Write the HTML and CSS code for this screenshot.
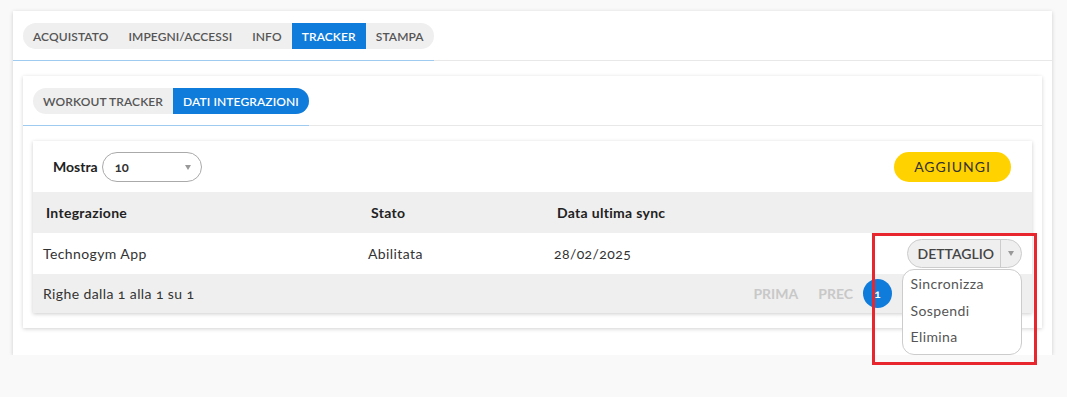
FILE: index.html
```html
<!DOCTYPE html>
<html lang="it">

<head>
    <meta charset="UTF-8">
    <meta name="viewport" content="width=device-width, initial-scale=1.0">
    <title>Tracker - Dati integrazioni</title>
    <link rel="stylesheet" href="styles.css">
</head>

<body>
    <div class="panel">
        <div class="tab-head">
            <div class="tab-wrap">
                <ul class="tabs">
                    <li>Acquistato</li>
                    <li>Impegni/Accessi</li>
                    <li>Info</li>
                    <li class="active">Tracker</li>
                    <li>Stampa</li>
                </ul>
            </div>
        </div>

        <div class="card">
            <div class="tab-head">
                <div class="tab-wrap">
                    <ul class="tabs">
                        <li>Workout Tracker</li>
                        <li class="active">Dati integrazioni</li>
                    </ul>
                </div>
            </div>

            <div class="table-card">
                <div class="toolbar">
                    <label class="show">
                        Mostra
                        <span class="select">10<span class="caret"></span></span>
                    </label>
                    <button class="btn-add">Aggiungi</button>
                </div>

                <div class="row head">
                    <div>Integrazione</div>
                    <div>Stato</div>
                    <div>Data ultima sync</div>
                    <div></div>
                </div>
                <div class="row body">
                    <div>Technogym App</div>
                    <div>Abilitata</div>
                    <div>28/02/2025</div>
                    <div class="actions">
                        <div class="btn-group">
                            <span class="btn-main">Dettaglio</span>
                            <span class="btn-toggle"><span class="caret"></span></span>
                            <ul class="menu">
                                <li>Sincronizza</li>
                                <li>Sospendi</li>
                                <li>Elimina</li>
                            </ul>
                        </div>
                    </div>
                </div>
                <div class="row foot">
                    <div class="info">Righe dalla 1 alla 1 su 1</div>
                    <div class="pager">
                        <span class="page-link">Prima</span>
                        <span class="page-link">Prec</span>
                        <span class="page-num">1</span>
                    </div>
                </div>
            </div>
        </div>
    </div>

    <!-- highlight box from the screenshot -->
    <div class="highlight"></div>
</body>

</html>
```

FILE: styles.css
```css
body {
    margin: 0;
    padding: 11px 15px 0 13px;
    background: #f9f9f9;
    font-family: Lato, "Open Sans", sans-serif;
    font-size: 14px;
    color: #333;
    font-variant-numeric: oldstyle-nums;
}

ul {
    margin: 0;
    padding: 0;
    list-style: none;
}

.panel {
    width: 1039px;
    background: #fff;
    box-shadow: 0 1px 4px rgba(0, 0, 0, 0.18);
    padding-bottom: 27px;
}

/* Tabs */
.tab-head {
    display: flex;
    border-bottom: 1px solid #e8e8e8;
}

.tab-wrap {
    padding: 12px 0 11px 10px;
    border-bottom: 1px solid #9fcbf0;
    margin-bottom: -1px;
}

.tabs {
    display: flex;
    height: 26px;
    background: #efefef;
    border-radius: 13px;
    overflow: hidden;
}

.tabs li {
    display: flex;
    align-items: center;
    padding: 0 10px;
    font-size: 12px;
    font-weight: 600;
    letter-spacing: 0.1px;
    text-transform: uppercase;
    color: #555;
    white-space: nowrap;
}

.tabs li.active {
    background: #0f7bdb;
    color: #fff;
}

.card {
    margin: 15px 10px 0 10px;
    background: #fff;
    box-shadow: 0 1px 4px rgba(0, 0, 0, 0.18);
    padding-bottom: 15px;
}

.table-card {
    margin: 15px 10px 0 10px;
    background: #fff;
    box-shadow: 0 1px 4px rgba(0, 0, 0, 0.2);
}

/* Toolbar */
.toolbar {
    display: flex;
    justify-content: space-between;
    align-items: center;
    height: 51px;
    padding: 0 21px 0 20px;
}

.show {
    display: flex;
    align-items: center;
    gap: 4px;
    font-weight: 700;
    color: #222;
}

.select {
    position: relative;
    display: flex;
    align-items: center;
    width: 86px;
    height: 28px;
    padding-left: 12px;
    border: 1px solid #aaa;
    border-radius: 15px;
    font-size: 13px;
    font-weight: 700;
    color: #333;
}

.select .caret {
    position: absolute;
    right: 10px;
    top: 12px;
}

.caret {
    display: inline-block;
    width: 0;
    height: 0;
    border-left: 3.5px solid transparent;
    border-right: 3.5px solid transparent;
    border-top: 5px solid #999;
}

.btn-add {
    width: 117px;
    height: 30px;
    border: 0;
    border-radius: 15px;
    background: #ffd200;
    font-family: inherit;
    font-size: 14px;
    letter-spacing: 1px;
    text-transform: uppercase;
    color: #333;
}

/* Table */
.row {
    display: grid;
    grid-template-columns: 325px 186px 1fr 140px;
    align-items: center;
}

.row.head {
    height: 41px;
    background: #efefef;
    font-weight: 700;
    color: #222;
    letter-spacing: 0.3px;
}

.row.head > div {
    padding-left: 13px;
}

.row.body {
    height: 41px;
    letter-spacing: 0.4px;
}

.row.body > div {
    padding-left: 10px;
}

.row.body > .actions {
    display: flex;
    justify-content: flex-end;
    padding-right: 10px;
    letter-spacing: 0;
}

.row.foot {
    display: flex;
    justify-content: space-between;
    height: 39px;
    background: #efefef;
    padding-left: 10px;
}

.info {
    letter-spacing: 0.4px;
}

.pager {
    display: flex;
    align-items: center;
    gap: 20px;
    padding-right: 140px;
}

.page-link {
    font-weight: 700;
    text-transform: uppercase;
    color: #c8c8c8;
}

.page-num {
    display: flex;
    justify-content: center;
    align-items: center;
    width: 29px;
    height: 29px;
    margin-left: -10px;
    border-radius: 50%;
    background: #0f7bdb;
    color: #fff;
    font-size: 12px;
    font-weight: 700;
}

/* Split button */
.btn-group {
    position: relative;
    display: flex;
    height: 27px;
    border: 1px solid #ccc;
    border-radius: 15px;
    background: #efefef;
}

.btn-main {
    display: flex;
    align-items: center;
    padding: 0 6px 0 10px;
    border-right: 1px solid #ccc;
    font-weight: 600;
    text-transform: uppercase;
    color: #444;
}

.btn-toggle {
    display: flex;
    align-items: center;
    padding: 0 7px;
}

.menu {
    position: absolute;
    top: 29px;
    left: -6px;
    right: -1px;
    z-index: 2;
    padding: 1px 0 3px;
    background: #fff;
    border: 1px solid #ccc;
    border-radius: 12px;
}

.menu li {
    padding: 0 8px;
    line-height: 26.5px;
    letter-spacing: 0.4px;
    color: #555;
}

.highlight {
    position: absolute;
    left: 872px;
    top: 233px;
    width: 159px;
    height: 126px;
    border: 3px solid #e8262e;
    z-index: 3;
}
```
